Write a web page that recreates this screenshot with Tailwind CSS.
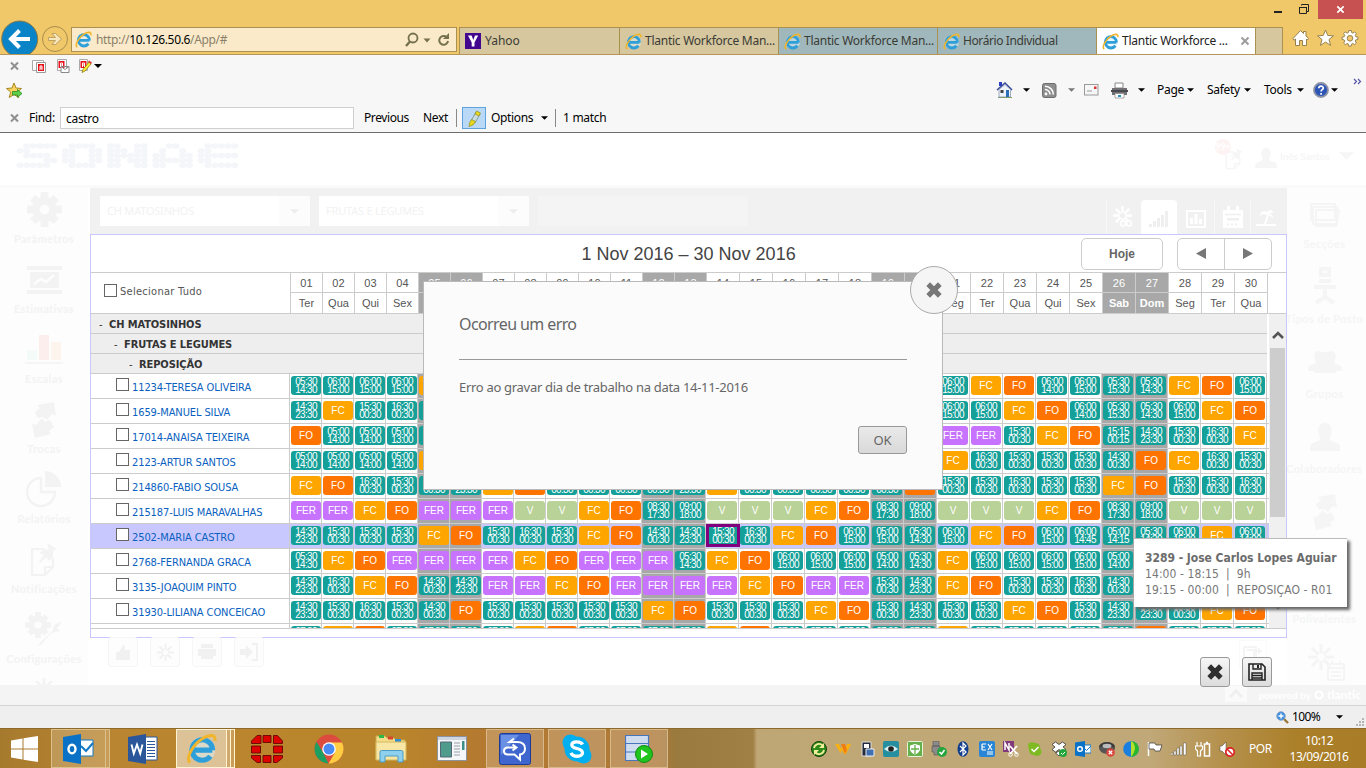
<!DOCTYPE html>
<html lang="pt">
<head>
<meta charset="utf-8">
<title>Tlantic Workforce Management</title>
<script src="https://cdn.jsdelivr.net/npm/@tailwindcss/browser@4"></script>
</head>
<body class="w-[1366px] h-[768px] overflow-hidden bg-white font-['Noto_Sans','Open_Sans',sans-serif]">
<svg class="hidden">
  <symbol id="ie" viewBox="0 0 16 16"><circle cx="8.4" cy="8.6" r="6.6" fill="#d9f1fb" opacity=".5"/><path d="M3.6 8.8h10M13.7 8.9A5.3 5.3 0 1 0 12.6 12" fill="none" stroke="#2f9fda" stroke-width="2.7"/><path d="M2.2 15.2C-.6 13.6 3.3 6 8.6 2.8c3.4-2 7-2.4 6.3 1.2" fill="none" stroke="#f0b52a" stroke-width="1.5"/></symbol>
  <symbol id="caret" viewBox="0 0 8 4"><path d="M0 0h8L4 4z" fill="currentColor"/></symbol>
  <symbol id="x" viewBox="0 0 16 16"><path d="M2.200 2.200l11.600 11.600M13.800 2.200L2.200 13.800" stroke="currentColor" stroke-width="5.200"/></symbol>
  <symbol id="xs" viewBox="0 0 10 10"><path d="M1.5 1.5l7 7M8.5 1.5l-7 7" stroke="currentColor" stroke-width="2"/></symbol>
  <symbol id="gear" viewBox="0 0 36 36"><g fill="currentColor"><circle cx="18" cy="18" r="13"/><g><rect x="14" y="0" width="8" height="36"/><rect x="0" y="14" width="36" height="8"/><rect x="14" y="1" width="8" height="34" transform="rotate(45 18 18)"/><rect x="14" y="1" width="8" height="34" transform="rotate(-45 18 18)"/></g></g><circle cx="18" cy="18" r="5" fill="#fdfdfd"/></symbol>
  <symbol id="burst" viewBox="0 0 20 20"><g stroke="currentColor" stroke-width="2.4"><path d="M10 0v7M10 13v7M0 10h7M13 10h7M3 3l5 5M12 12l5 5M17 3l-5 5M8 12l-5 5"/></g></symbol>
  <symbol id="swap" viewBox="0 0 24 36"><g fill="currentColor"><path d="M5 3L22 0l2 14-4-2-5 6-4-3-5 1-3-6 5-4z"/><path d="M19 32L3 36 0 22l4 1 6-7 3 4 5-2 4 7-5 4z"/></g></symbol>
  <symbol id="note" viewBox="0 0 28 34"><path d="M2 6h13M2 5v27h13l8-8V15M15 32v-8h8" fill="none" stroke="currentColor" stroke-width="2.2"/><path d="M17 0l10 6-4 2 0 6-4 4-3-4-6 6-1-1 5-7-5-2 5-3 5-1z" fill="currentColor"/></symbol>
  <symbol id="person" viewBox="0 0 30 28"><path d="M15 0c5 0 7 4 6.500 9-.4 4-2 5-2 7 1 3 10 3 10.500 7v5H0v-5c.5-4 9-4 10.500-7 0-2-1.600-3-2-7C8 4 10 0 15 0z" fill="currentColor"/></symbol>
</svg>
<div class="flex flex-col w-[1366px] h-[768px]">

<!-- browser frame -->
<header class="h-[55px] bg-[#f0c869] border-b border-[#b8965a] flex flex-col shrink-0">
  <div class="h-[19px] flex justify-end pr-[3px]">
    <svg width="92" height="19"><rect x="48" y="11" width="8" height="2" fill="#222"/><path d="M73.500 7.500h7v6h-7zM73 7.500h8M75.500 5.500v-1h7v7h-1.500" fill="none" stroke="#222"/></svg>
    <div class="w-[45px] h-[19px] bg-[#c75050] text-white flex items-center justify-center"><svg width="9" height="9"><use href="#xs"/></svg></div>
  </div>
  <div class="h-[35px] flex items-end">
    <svg width="41" height="35" class="shrink-0"><circle cx="19.700" cy="20" r="18" fill="#0a84c6" stroke="#8d7a45"/><path d="M30 20H12M19.500 11.500L11 20l8.500 8.500" fill="none" stroke="#fff" stroke-width="4"/></svg>
    <svg width="30" height="35" class="shrink-0"><circle cx="14" cy="20" r="12.500" fill="#f0c869" stroke="#a98d50"/><path d="M7.500 18.500h7l-3.500-4h3.500l6 5.500-6 5.500H11l3.500-4h-7z" fill="#f8e6bd" stroke="#b09455" stroke-width=".8"/></svg>
    <div class="w-[386px] h-[25px] mb-[2px] bg-[#faeac9] border border-[#ab9150] flex items-center pl-[3px] text-[12px] text-[#8a8169] shrink-0">
      <svg width="17" height="17"><use href="#ie"/></svg>
      <span class="ml-[4px] tracking-[-0.34px] whitespace-nowrap"><span>http://</span><span class="text-black">10.126.50.6</span>/App/#</span>
      <svg class="ml-auto mr-[5px]" width="46" height="16" fill="none" stroke="#75704f"><circle cx="8" cy="6" r="4.500" stroke-width="1.800"/><path d="M5 9.500l-4 4.500" stroke-width="2.400"/><path d="M18.500 6.500h7l-3.500 4z" fill="#75704f" stroke="none"/><path d="M43 9a4.400 4.400 0 1 1-1.500-4" stroke-width="2"/><path d="M44 1v6h-6z" fill="#75704f" stroke="none"/></svg>
    </div>
    <nav class="ml-[2px] h-[27px] flex text-[12px] text-[#3b3b35] border-l border-t border-[#ab9150] tracking-[-0.26px] whitespace-nowrap">
      <div class="w-[160px] bg-[#d6c79f] border-r border-[#ab9150] flex items-center pl-[5px] gap-[4px]"><svg width="16" height="16"><rect width="16" height="16" fill="#41078f"/><path d="M3 2.500h3.600L8.300 7 10 2.500h3.200L9.500 9.500v4H6.700v-4z" fill="#fff"/></svg><span class="tracking-normal">Yahoo</span></div>
      <div class="w-[159px] bg-[#d6c79f] border-r border-[#ab9150] flex items-center pl-[5px] gap-[3px]"><svg width="17" height="17"><use href="#ie"/></svg>Tlantic Workforce Man...</div>
      <div class="w-[159px] bg-[#a0b8bc] border-r border-[#ab9150] flex items-center pl-[5px] gap-[3px]"><svg width="17" height="17"><use href="#ie"/></svg>Tlantic Workforce Man...</div>
      <div class="w-[159px] bg-[#a0b8bc] border-r border-[#ab9150] flex items-center pl-[5px] gap-[3px]"><svg width="17" height="17"><use href="#ie"/></svg><span class="tracking-[-0.4px]">Horário Individual</span></div>
      <div class="w-[159px] bg-white border-r border-[#ab9150] flex items-center pl-[5px] gap-[3px] text-[#222]"><svg width="17" height="17"><use href="#ie"/></svg>Tlantic Workforce ...<svg class="ml-auto mr-[5px] text-[#9c9c9c]" width="10" height="10"><use href="#xs"/></svg></div>
      <div class="w-[27px] bg-[#d6c79f] border-r border-[#ab9150]"></div>
    </nav>
    <svg class="ml-[9px] mb-[7px]" width="68" height="18" fill="#fff" stroke="#97824f" stroke-width="1"><path d="M1 9.500L8.500 1.500l3 3V2.500h2.500V7l2.500 2.500-1 1.500-1-1v6.500h-4v-5h-3v5h-4V10l-1.500 1.200z"/><path d="M33.500 1l2.300 5.500 5.700.3-4.500 3.700 1.600 5.900-5.100-3.300-5.100 3.300 1.600-5.900-4.500-3.700 5.700-.3z"/><path d="M56.800 1.500h2.400l.4 2 1.300.6 1.800-1.200 1.700 1.700-1.100 1.800.5 1.300 2.100.4v2.400l-2.100.4-.5 1.300 1.100 1.800-1.700 1.700-1.800-1.200-1.300.6-.4 2h-2.400l-.4-2-1.300-.6-1.800 1.200-1.700-1.700 1.100-1.800-.5-1.300-2.100-.4V8.100l2.100-.4.5-1.300-1.100-1.800 1.700-1.700 1.800 1.200 1.300-.6z"/><circle cx="58" cy="9.300" r="2.800" fill="#f0c869"/></svg>
  </div>
</header>

<!-- toolbars -->
<section class="h-[78px] bg-[#f7f7f7] border-b border-[#6d6d6d] text-[12px] text-black shrink-0 tracking-[-0.3px]">
  <div class="h-[22px] flex items-center pl-[9px]">
    <svg class="text-[#8f8f8f]" width="11" height="10"><use href="#xs"/></svg>
    <svg class="ml-[12px]" width="72" height="16"><g fill="#fff" stroke="#aaa"><path d="M.5 2.500h11v10H.5zM25.500 1.500h9v11h-9zM47.500 1.500h8v11h-8z"/><path d="M4.500 4.500h9v10h-9z" stroke="#999"/></g><g fill="#e8141c"><path d="M6 6h6v7H6zM26.500 3h6v7h-6zM48.500 3h6v7h-6z"/></g><path d="M8 12V8h2v4M8 10h2M28.500 9V5h2v4M28.500 7h2M50.500 9V5h2v4M50.500 7h2" stroke="#fff" fill="none"/><path d="M29 8.500h8v6h-8zl4 3 4-3" fill="#fff" stroke="#888"/><path d="M57 4l2 2-6 7-3 1.500 1-3z" fill="#ffee30" stroke="#8a7a10" stroke-width=".8"/><path d="M57 2.500l3 2-1 1.500-3-2z" fill="#e03a3a"/></svg>
    <svg class="-ml-[10px]" width="8" height="4"><use href="#caret"/></svg>
  </div>
  <div class="h-[27px] flex items-center pl-[6px]">
    <svg width="17" height="17"><path d="M8 1l2 5 5.500.5-4.200 3.600 1.500 5.400L8 12.500l-4.800 3 1.500-5.400L.5 6.500 6 6z" fill="#fbd460" stroke="#a88620"/><path d="M6.500 9.500h5V7.500l4.500 4-4.500 3.800v-2.300h-5z" fill="#5fd04a" stroke="#2b8a25" stroke-width=".8"/></svg>
    <div class="ml-auto flex items-center mr-[4px] -mt-px">
      <svg width="17" height="18"><path d="M3 1h3v4H3z" fill="#2b3fc0"/><path d="M1 9l8-7 7 7" fill="none" stroke="#3a4a9a" stroke-width="1.600"/><path d="M3 8.500L9 3.500l5.500 5V16H3z" fill="#eef2fa" stroke="#7c8cab" stroke-width=".7"/><path d="M4.500 9h3v3h-3z" fill="#444"/><path d="M10 9h3v7h-3z" fill="#2a6fb5"/><path d="M2 16.500h14" stroke="#7f9a6c"/></svg>
      <svg class="ml-[10px]" width="7" height="4"><use href="#caret"/></svg>
      <svg class="ml-[12px]" width="15" height="15"><rect x=".5" y=".5" width="13.500" height="14" rx="2" fill="#8e8e8e" stroke="#6e6e6e"/><circle cx="4" cy="11" r="1.400" fill="#fff"/><path d="M3 6.500a5 5 0 0 1 5 5M3 3.200a8.300 8.300 0 0 1 8.300 8.300" fill="none" stroke="#fff" stroke-width="1.500"/></svg>
      <svg class="ml-[11px] text-[#777]" width="7" height="4"><use href="#caret"/></svg>
      <svg class="ml-[9px]" width="15" height="12"><rect x=".5" y=".5" width="13.500" height="10.500" fill="#f6f6f6" stroke="#999"/><path d="M10 2.500h2.500v2.500H10z" fill="#d33"/><path d="M3 7h5" stroke="#999"/></svg>
      <svg class="ml-[12px]" width="17" height="17"><path d="M4 1h8v5H4z" fill="#fff" stroke="#888"/><path d="M1 6h15v7H1z" fill="#6f6f74"/><path d="M0 8h17v2H0z" fill="#4a4a4e"/><path d="M4 11.500h9V16H4z" fill="#fff" stroke="#888" stroke-width=".7"/><path d="M7 13h3v2H7z" fill="#2b8fc0"/></svg>
      <svg class="ml-[10px]" width="7" height="4"><use href="#caret"/></svg>
      <span class="ml-[12px] w-[26px]">Page</span><svg class="ml-[4px]" width="7" height="4"><use href="#caret"/></svg>
      <span class="ml-[13px] w-[32px]">Safety</span><svg class="ml-[5px]" width="7" height="4"><use href="#caret"/></svg>
      <span class="ml-[13px] w-[29px]">Tools</span><svg class="ml-[4px]" width="7" height="4"><use href="#caret"/></svg>
      <svg class="ml-[9px]" width="16" height="16"><circle cx="8" cy="8" r="7" fill="#2d55b8" stroke="#8d93a5" stroke-width="1.800"/><path d="M5.800 6.300C5.800 3.300 10.300 3.500 10.300 6c0 1.700-2.200 1.700-2.200 3.400M8.100 11v1.800" fill="none" stroke="#fff" stroke-width="1.700"/></svg>
      <svg class="ml-[2px]" width="7" height="4"><use href="#caret"/></svg>
      <svg class="ml-[15px] mb-[17px]" width="9" height="7" fill="none" stroke="#5555a8" stroke-width="1.200"><path d="M1 1l2.500 2.500L1 6M5 1l2.500 2.500L5 6"/></svg>
    </div>
  </div>
  <div class="h-[28px] flex items-center pl-[9px]">
    <svg class="text-[#8f8f8f]" width="11" height="10"><use href="#xs"/></svg>
    <span class="ml-[9px] w-[31px]">Find:</span>
    <div class="w-[294px] h-[22px] bg-white border border-[#cfcfcf] pl-[5px] leading-[21px]">castro</div>
    <span class="ml-[10px] w-[59px] tracking-[-0.4px] -mt-px">Previous</span><span class="w-[33px] tracking-[-0.3px] -mt-px">Next</span>
    <div class="w-px h-[18px] bg-[#888]"></div>
    <div class="ml-[5px] w-[24px] h-[22px] bg-[#b9d9f7] border border-[#5fa2dd] flex items-center justify-center"><svg width="14" height="17"><path d="M9 2l4 2-5 9-4-2z" fill="#c9dce0" stroke="#7b8f80" stroke-width=".8"/><path d="M9.500 1l4 2-1.500 3-4-2zM4.500 9.500l4 2L6 15l-4 1.500.5-3.500z" fill="#e8d81c" stroke="#88801a" stroke-width=".6"/></svg></div>
    <span class="ml-[5px] w-[50px] tracking-[-0.35px] -mt-px">Options</span><svg width="7" height="4"><use href="#caret"/></svg>
    <div class="ml-[7px] w-px h-[18px] bg-[#888]"></div>
    <span class="ml-[7px]">1 match</span>
  </div>
</section>

<!-- web page -->
<main class="relative h-[572px] bg-white shrink-0 flex flex-col overflow-hidden">
  <div class="h-[52px] flex items-start justify-between pl-[14px] pr-[12px] shrink-0">
    <svg id="logo" class="mt-[9px]" width="226" height="28" fill="#f5f6f9"></svg>
    <div class="flex items-center text-[#f6f6f6] text-[10px] font-bold font-['Lato'] mt-[6px]">
      <div class="relative w-[30px] h-[34px]"><svg class="absolute left-[10px] top-[8px]" width="18" height="24"><use href="#note"/></svg><span class="absolute left-0 top-0 w-[16px] h-[16px] rounded-full bg-[#fdf3f3] text-white text-[9px] text-center leading-[16px]">99+</span></div>
      <svg class="ml-[10px] mt-[4px]" width="22" height="20"><use href="#person"/></svg>
      <span class="ml-[3px] w-[50px] whitespace-nowrap tracking-[-0.1px]">Inês Santos</span>
      <svg class="ml-[9px]" width="15" height="8"><use href="#caret"/></svg>
    </div>
  </div>
  <div class="h-[3px] bg-[#fafafa] shrink-0"></div>
  <div class="flex h-[497px] shrink-0">
    <aside id="left" class="w-[88px] bg-[#fdfdfd] text-[#f3f3f3] text-[11px] font-['Lato'] font-bold flex flex-col"></aside>
    <div class="w-[2px] bg-white"></div>
    <section class="w-[1197px] flex flex-col">
      <div class="h-[46px] bg-[#f1f1f1] flex items-center pl-[10px] text-[11px] text-[#f2f2f2] shrink-0 tracking-[-0.2px]">
        <div class="w-[210px] h-[30px] bg-white flex items-center pl-[7px]">CH MATOSINHOS<div class="ml-auto w-[31px] h-[30px] bg-[#fcfcfc] text-[#eee] flex items-center justify-center"><svg width="9" height="5"><use href="#caret"/></svg></div></div>
        <div class="ml-[9px] w-[210px] h-[30px] bg-white flex items-center pl-[7px]">FRUTAS E LEGUMES<div class="ml-auto w-[31px] h-[30px] bg-[#fcfcfc] text-[#eee] flex items-center justify-center"><svg width="9" height="5"><use href="#caret"/></svg></div></div>
        <div class="ml-[9px] w-[210px] h-[30px] bg-[#f4f4f4]"></div>
        <div class="ml-auto self-end h-[34px] flex text-white mr-[6px]">
          <div class="w-[35px] border-l border-[#f8f8f8] flex items-center justify-center"><svg width="22" height="22"><use href="#burst" width="19" height="19"/><circle cx="10" cy="17.500" r="2.500" fill="#f1f1f1" stroke="#fff" stroke-width="1.500"/><circle cx="16" cy="17.500" r="2.500" fill="#f1f1f1" stroke="#fff" stroke-width="1.500"/></svg></div>
          <div class="w-[36px] bg-white rounded-t-[4px] flex items-center justify-center pt-[4px]"><svg width="20" height="18" fill="#efefef"><path d="M0 14h3v3H0zM4 11h3v6H4zM8 8h3v9H8zM12 5h3v12h-3zM16 1h3v16h-3z"/></svg></div>
          <div class="w-[37px] flex items-center justify-center pt-[4px]"><svg width="20" height="18"><path d="M1 1h18v16H1z" fill="none" stroke="#fff" stroke-width="2"/><path d="M4 8h3v6H4zM8.500 4h3v10h-3zM13 9h3v5h-3z" fill="#fff"/></svg></div>
          <div class="w-[36px] border-l border-[#f8f8f8] flex items-center justify-center"><svg width="20" height="22"><path d="M0 4h20v18H0zM4 0h3v5H4zM13 0h3v5h-3z" fill="#fff"/><path d="M2 8.500h16" stroke="#efefef" stroke-width="1.500"/><path d="M4 12h12v2.500H4zM4 17.500h2v2H4zM8 17.500h2v2H8zM12 17.500h2v2h-2z" fill="#efefef"/></svg></div>
          <div class="w-[31px] border-l border-[#f8f8f8] flex items-center justify-center"><svg width="20" height="20"><path d="M0 18h20M9 17l3-9" stroke="#fff" stroke-width="2"/><path d="M4 9c0-4 4-6 7-4 2-3 6-2 7 1-2-1-4 0-5 1 3 0 4 2 4 4-2-2-4-3-6-3-3-1-5-1-7 1z" fill="#fff"/></svg></div>
        </div>
      </div>

      <!-- schedule -->
      <div class="h-[404px] border border-[#c8c8ff] bg-white flex flex-col shrink-0">
        <div class="relative h-[37px] flex items-center justify-end pr-[14px] shrink-0 font-['Liberation_Sans']">
          <h1 class="absolute left-[490.5px] top-[8px] text-[18px] leading-[22px] text-[#444] whitespace-nowrap">1 Nov 2016 – 30 Nov 2016</h1>
          <div class="w-[82px] h-[32px] border border-[#ccc] rounded-[5px] text-[12px] font-bold text-[#666] flex items-center justify-center">Hoje</div>
          <div class="ml-[14px] w-[95px] h-[32px] border border-[#ccc] rounded-[5px] flex text-[#777]">
            <div class="w-[47px] border-r border-[#ccc] flex items-center justify-center"><svg width="10" height="11"><path d="M10 0v11L0 5.500z" fill="currentColor"/></svg></div>
            <div class="flex-1 flex items-center justify-center"><svg width="10" height="11"><path d="M0 0v11l10-5.500z" fill="currentColor"/></svg></div>
          </div>
        </div>
        <div class="h-[42px] border-y border-[#ccc] flex shrink-0">
          <div class="w-[199px] flex items-center pl-[13px] text-[11px] text-[#555] font-['DejaVu_Sans_Condensed','DejaVu_Sans'] tracking-[0.28px]"><span class="w-[13px] h-[13px] border border-[#666] bg-white mr-[3px] -mt-[5px]"></span><span class="-mt-[2px]">Selecionar Tudo</span></div>
          <div id="days" class="flex text-[11px] text-[#555] font-['Liberation_Sans'] border-r border-[#ccc]"></div>
        </div>
        <div class="h-[315px] border-b border-[#ccc] flex overflow-hidden shrink-0">
          <div id="rows" class="w-[1178px] h-[314px] overflow-hidden"></div>
          <div class="w-[17px] h-[314px] bg-[#f0f0f0] flex flex-col items-center">
            <svg class="mt-[16px]" width="12" height="10"><path d="M1 8l5-5 5 5" fill="none" stroke="#555" stroke-width="2.600"/></svg>
            <div class="mt-[8px] w-[15px] h-[169px] bg-[#cdcdcd]"></div>
            <svg class="mt-[84px]" width="12" height="10"><path d="M1 2l5 5 5-5" fill="none" stroke="#555" stroke-width="2.600"/></svg>
          </div>
        </div>
      </div>
      <div class="flex pl-[18px] gap-[12px] text-[#f1f1f1] -mt-px">
        <div class="w-[30px] h-[30px] border border-[#f6f6f6] rounded-[3px] bg-[#fdfdfd] flex items-center justify-center"><svg width="16" height="16"><path d="M1 8h3l4-7c3 0 2 4 1 5h6v10H1z" fill="currentColor"/></svg></div>
        <div class="w-[30px] h-[30px] border border-[#f6f6f6] rounded-[3px] bg-[#fdfdfd] flex items-center justify-center"><svg width="17" height="17"><use href="#burst"/></svg></div>
        <div class="w-[30px] h-[30px] border border-[#f6f6f6] rounded-[3px] bg-[#fdfdfd] flex items-center justify-center"><svg width="18" height="16"><path d="M3 0h12v4H3zM0 5h18v7H0zM3 12h12v3H3z" fill="currentColor"/></svg></div>
        <div class="w-[30px] h-[30px] border border-[#f6f6f6] rounded-[3px] bg-[#fdfdfd] flex items-center justify-center"><svg width="18" height="18"><path d="M0 6h6V2l7 7-7 7v-4H0z" fill="currentColor"/><path d="M12 1h5v16h-5" fill="none" stroke="currentColor" stroke-width="2"/></svg></div>
        <div class="ml-auto mr-[20px] mt-[3px] w-[28px] h-[28px] border border-[#fafafa] flex justify-center pt-[5px]"><svg width="20" height="14" fill="none" stroke="#f1f1f1" stroke-width="1.500"><path d="M1 1h12v12M4 4h7v9M1 1v12M13 5h6M16 2v6"/></svg></div>
      </div>
    </section>
    <aside id="right" class="w-[79px] bg-[#fdfdfd] text-[#f5f5f5] text-[11px] font-['Lato'] font-bold flex flex-col overflow-hidden"></aside>
  </div>
  <footer class="h-[20px] bg-[#f4f4f4] flex items-center justify-end pr-[5px] text-[10px] font-bold text-white font-['Lato'] shrink-0">
    <div class="w-[22px] h-[16px] mb-[3px] bg-[#fafafa] text-[#efefef] flex items-center justify-center"><svg width="14" height="9"><path d="M1 8l6-6 6 6" stroke="currentColor" stroke-width="3" fill="none"/></svg></div>
    <span class="ml-[11px]">powered by</span><svg class="mx-[3px]" width="10" height="10"><circle cx="5" cy="5" r="3.500" fill="none" stroke="#fff" stroke-width="2.200"/></svg><span class="text-[12px] font-black">tlantic</span>
  </footer>

  <!-- page actions -->
  <div class="absolute left-[1200px] top-[524px] flex gap-[12px]">
    <div class="w-[30px] h-[30px] rounded-[3px] border border-[#999] bg-linear-to-b from-[#f6f6f6] to-[#dcdcdc] text-[#2f2f2f] flex items-center justify-center"><svg width="16" height="16"><use href="#x"/></svg></div>
    <div class="w-[30px] h-[30px] rounded-[3px] border border-[#999] bg-linear-to-b from-[#f6f6f6] to-[#dcdcdc] flex items-center justify-center"><svg width="18" height="18" fill="none" stroke="#222" stroke-width="1.600"><path d="M1 1h13l3 3v13H1z"/><path d="M5 1v5h8V1M4 17v-7h10v7M4.500 12.500h9M4.500 15h9" stroke-width="1.400"/><path d="M10 2v3" stroke-width="2"/></svg></div>
  </div>

  <!-- error dialog -->
  <div class="absolute left-[423px] top-[148px] w-[520px] h-[209px] bg-[#fbfbfb] border border-[#b9b9b9] text-[#666] px-[35px] pt-[30px] flex flex-col">
    <h2 class="text-[16px] leading-[24px] h-[48px] border-b border-[#999] tracking-[-0.6px]">Ocorreu um erro</h2>
    <p class="mt-[17px] text-[13px] leading-[20px] tracking-[-0.3px] whitespace-nowrap">Erro ao gravar dia de trabalho na data 14-11-2016</p>
    <button class="mt-[29px] self-end w-[49px] h-[28px] border border-[#999] rounded-[3px] bg-linear-to-b from-[#eaeaea] to-[#d9d9d9] text-[13px] leading-[24px]">OK</button>
    <div class="absolute -right-[16px] -top-[16px] w-[48px] h-[48px] rounded-full border border-[#aaa] bg-[#f5f5f5] text-[#777] flex items-center justify-center"><svg width="16" height="16"><use href="#x"/></svg></div>
  </div>

  <!-- shift tooltip -->
  <div class="absolute left-[1134px] top-[405px] w-[213px] h-[69px] bg-white border-t border-[#bbb] shadow-[3px_3px_3px_#666] pl-[11px] pt-[11px] text-[12px] leading-[16px] text-[#777] font-['DejaVu_Sans_Condensed','DejaVu_Sans'] whitespace-pre"><div class="font-bold text-[#6c6c6c] tracking-[-0.03px]">3289 - Jose Carlos Lopes Aguiar</div><div class="tracking-[0.08px]">14:00 - 18:15  |  9h</div><div class="tracking-[0.08px]">19:15 - 00:00  |  REPOSIÇAO - R01</div></div>
</main>

<!-- status bar -->
<div class="h-[23px] bg-[#efefef] border-t border-[#d5d5d5] flex items-center justify-end text-[12px] text-black shrink-0">
  <svg width="13" height="13"><path d="M7.500 7.500l4.500 4.500" stroke="#9c7a40" stroke-width="2.400"/><circle cx="5" cy="5" r="4.200" fill="#3f8fe0" stroke="#7aa0c8"/><path d="M5 2.500v5M2.500 5h5" stroke="#fff" stroke-width="1.400"/></svg>
  <span class="ml-[3px] w-[30px] tracking-[-0.6px]">100%</span>
  <svg class="ml-[14px]" width="7" height="4"><use href="#caret"/></svg>
  <svg class="ml-[13px] mt-[10px] mr-[1px]" width="9" height="9" fill="#b5b5b5"><path d="M6 0h2v2H6zM3 3h2v2H3zM6 3h2v2H6zM0 6h2v2H0zM3 6h2v2H3zM6 6h2v2H6z"/></svg>
</div>

<!-- taskbar -->
<footer class="h-[40px] flex items-center border-t border-[#8d6a2c] shrink-0 bg-[linear-gradient(90deg,#a67a2e_0,#ba8530_110px,#b9852b_400px,#b47a30_480px,#ad7838_660px,#9a7a3e_675px,#a08045_753px,#bfa775_757px,#c0a878_1150px,#b5914d_1220px,#ab7f28_1300px,#a97c28_1366px)]">
  <svg class="ml-[11px]" width="28" height="26" fill="#fff"><path d="M0 4.500L11.500 2.500v10H0zM12.500 2.300L27 0v12.500H12.500zM0 13.500h11.500v10L0 21.500zM12.500 13.500H27V26l-14.500-2.300z"/></svg>
  <div class="ml-[12px] w-[55px] h-[39px] border border-[#dcc18a] bg-white/20 flex items-center justify-center"><svg width="31" height="30"><path d="M15 6h15v16H15z" fill="#fff" stroke="#1479c4"/><path d="M18 12l5 5 7-8" fill="none" stroke="#1479c4" stroke-width="2"/><path d="M0 3l18-3v30L0 27z" fill="#0a72c6"/><ellipse cx="9" cy="15" rx="3.500" ry="4.300" fill="none" stroke="#fff" stroke-width="2.400"/></svg></div>
  <div class="w-[4px] h-[39px] border-r border-y border-[#dcc18a] bg-white/20"></div>
  <svg class="ml-[18px]" width="30" height="30"><path d="M15 3h14v23H15z" fill="#fff" stroke="#2b579a"/><path d="M19 7.500h8M19 10.500h8M19 13.500h8M19 16.500h8M19 19.500h8M19 22.500h8" stroke="#2b579a"/><path d="M0 3l18-3v30L0 27z" fill="#2b579a"/><path d="M3.500 10.500l2.300 9 3.200-9 3.200 9 2.300-9" fill="none" stroke="#fff" stroke-width="1.900"/></svg>
  <div class="ml-[18px] w-[51px] h-[39px] border border-[#fff3d2] bg-white/50 flex items-center justify-center"><svg width="31" height="31"><use href="#ie"/></svg></div>
  <div class="w-[4px] h-[39px] border-r border-y border-[#fff3d2] bg-white/30"></div>
  <div class="w-[4px] h-[39px] border-r border-y border-[#fff3d2] bg-white/20"></div>
  <svg class="ml-[16px]" width="32" height="28" fill="#dd0000" stroke="#5b0000" stroke-width=".8"><path d="M6 .5h4v8H.5V6zM12 .5h8v7h-8zM22.500 .5h4l5 5.500v2.500h-9zM.5 11h9v7h-9zM22.500 11h9v7h-9zM.5 20.500h9v7H6L.5 23zM12 20.500h8v7h-8zM22.500 20.500h9V23L26 27.500h-3.500z"/></svg>
  <svg class="ml-[31px]" width="30" height="30"><circle cx="15" cy="15" r="14.500" fill="#dd4b3e"/><path d="M2.500 7.700L9 18.500 14.500 29.500A14.500 14.500 0 0 1 2.500 7.700z" fill="#1da05f"/><path d="M15 8.500h13a14.500 14.500 0 0 1-13.500 21L21 18.500z" fill="#ffcd42"/><circle cx="15" cy="15" r="6.800" fill="#fff"/><circle cx="15" cy="15" r="5.500" fill="#4a8af4"/></svg>
  <svg class="ml-[31px]" width="32" height="29"><path d="M1 2h9l2 2h7l2 2h9v19H1z" fill="#f3dd8a" stroke="#c9a94c"/><path d="M4 1h5v3H4z" fill="#2db84a"/><path d="M13 2.500h5v3h-5z" fill="#d8452b"/><path d="M20 5h6v3h-6z" fill="#2b8fd8"/><path d="M1 8h30v18H1z" fill="#f7e6a4" stroke="#d6b85e"/><path d="M5 28V18q0-1.500 1.500-1.500h20q1.500 0 1.500 1.500v10h-5v-6H10v6z" fill="#8ed0ee" stroke="#4a9cc4"/></svg>
  <svg class="ml-[30px]" width="30" height="26"><path d="M.5 .5h29v24H.5z" fill="#f5f6f8" stroke="#8c93a0"/><path d="M1 1h28v3H1z" fill="#cfd6e2"/><path d="M3.500 6h11v15h-11z" fill="#4f9c8c" stroke="#567"/><path d="M17 7h6M17 10h6M17 13h6M17 16h6M17 19h6" stroke="#b8bcc4" stroke-width="1.300"/><path d="M25 5h2.500v9H25z" fill="#3c8f88"/></svg>
  <div class="ml-[19px] w-[58px] h-[39px] border border-[#d9b98a] bg-white/20 flex items-center justify-center"><svg width="32" height="32"><rect x=".5" y=".5" width="31" height="31" rx="2" fill="#3f66cf" stroke="#1f3a94"/><path d="M2 2h18L2 22z" fill="#7ea2ec" opacity=".7"/><path d="M15 5.500l-4.500 3.500H18c5 0 8 2.500 8 6.500 0 3-2 5.500-5 6v5l-5.500-5H9c-3 0-4-1.500-4-3.500S6.500 14.500 9 14.500h8M13.500 11.500l4 3-4 3" fill="none" stroke="#fff" stroke-width="2"/></svg></div>
  <div class="ml-[4px] w-[58px] h-[39px] border border-[#d9b98a] bg-white/20 flex items-center justify-center"><svg width="30" height="30"><circle cx="15" cy="15" r="12.500" fill="#00aff0"/><circle cx="8.500" cy="8.500" r="8" fill="#00aff0"/><circle cx="21.500" cy="21.500" r="8" fill="#00aff0"/><path d="M20.500 10.500C19 7 9.800 6.600 9.800 11c0 4.600 10.700 2.400 10.700 7.800 0 4.700-9.800 4.500-11.500 0" fill="none" stroke="#fff" stroke-width="3.300"/></svg></div>
  <div class="ml-[4px] w-[58px] h-[39px] border border-[#d9b98a] bg-white/20 flex items-center justify-center"><svg width="28" height="28"><path d="M.5 .5h23v25H.5zM.5 8.500h23M.5 17h23" fill="#cfdcf0" stroke="#4876bd" stroke-width="1.200"/><circle cx="19" cy="19" r="8.500" fill="#1fc41f" stroke="#148a14"/><path d="M16 14.500v9l7-4.500z" fill="#fff"/></svg></div>
  <div class="ml-auto flex gap-[8px]">
    <svg width="16" height="16"><circle cx="8" cy="8" r="7.500" fill="#2f8a1c" stroke="#123f0c"/><path d="M3 7a5 5 0 0 1 8.500-2.500M13 9a5 5 0 0 1-8.500 2.500" fill="none" stroke="#f2ee9a" stroke-width="1.800"/><path d="M13 2v5H8zM3 14V9h5z" fill="#f2ee9a"/></svg>
    <svg width="16" height="16"><path d="M0 3h4l2 5 2-5 2 5 2-5h4l-5 10h-2l-2-4-2 4H6z" fill="#f9b112"/><path d="M6 3l4 10 2-4-2-6z" fill="#f07c12"/></svg>
    <svg width="16" height="16"><path d="M3 1h9v14H3z" fill="#252b3a" stroke="#ddd"/><path d="M5 3h5v4H5z" fill="#fff"/><path d="M7 8h8v7H7z" fill="#3f6fb0" stroke="#eee"/></svg>
    <svg width="16" height="16"><rect width="16" height="16" rx="2" fill="#258f9f"/><path d="M1 8q7-7 14 0-7 6-14 0z" fill="#dceff2"/><circle cx="8" cy="8" r="2.800" fill="#222"/></svg>
    <svg width="16" height="16"><rect x=".5" y=".5" width="15" height="15" rx="1" fill="#66b04c" stroke="#e5f3dd"/><path d="M8 3l5 1.500v4Q12 12 8 13.500 4 12 3 8.500v-4z" fill="#fff"/><path d="M8 4v9M4 8h8" stroke="#66b04c" stroke-width="1.300"/></svg>
    <svg width="16" height="16"><path d="M2 0h6v5H2zM1 5h8v6H7v3H3v-3H1z" fill="#8b8b8b" stroke="#555" stroke-width=".6"/><circle cx="11" cy="11" r="5" fill="#25a53c"/><path d="M8.500 11l2 2 3-4" stroke="#fff" fill="none" stroke-width="1.500"/></svg>
    <svg width="16" height="16"><ellipse cx="8" cy="8" rx="5.500" ry="7.800" fill="#0f3f8c"/><path d="M5 5l6 6-3 3V2l3 3-6 6" fill="none" stroke="#fff" stroke-width="1.200"/></svg>
    <svg width="16" height="16"><rect width="16" height="16" rx="2" fill="#2a86d4"/><path d="M3 3h4M3 6h3M3 9h4M3 3v6M9 3l4 6M13 3L9 9M8 13h6M8 11h6" stroke="#fff" stroke-width="1.200"/></svg>
    <svg width="16" height="16"><rect width="11" height="11" fill="#80397b"/><path d="M2 9V2l4 7V2" fill="none" stroke="#fff" stroke-width="1.500"/><path d="M7 5l7 8M14 5l-7 8" stroke="#fff" stroke-width="1.800"/><circle cx="7.500" cy="13.500" r="1.800" fill="none" stroke="#fff"/><circle cx="13.500" cy="13.500" r="1.800" fill="none" stroke="#fff"/></svg>
    <svg width="16" height="16"><path d="M1 3Q4 0 8 2q5 0 5 5 3 4 0 7-3 2-6 0-4 0-5-4z" fill="#7fba22"/><path d="M4.500 8l2.500 2.500L11.500 6" stroke="#fff" fill="none" stroke-width="1.500"/></svg>
    <svg width="16" height="16"><path d="M4.500 1L8 3.500 11.500 1 15 3.500 12 6l3 2.500L11.500 11 8 8.500 4.500 11 1 8.500 4 6 1 3.500zM4.500 12L8 10l3.500 2L8 15z" fill="#fff" stroke="#333" stroke-width=".8"/><circle cx="12" cy="12" r="4" fill="#25a53c"/><path d="M10 12l1.500 1.500L14 11" stroke="#fff" fill="none"/></svg>
    <svg width="16" height="16"><path d="M8 4h8v8H8z" fill="#fff" stroke="#1479c4"/><path d="M9 7l2.500 2.500L16 5" fill="none" stroke="#1479c4"/><path d="M0 1.500L10 0v16L0 14.500z" fill="#0a72c6"/><circle cx="5" cy="8" r="2.300" fill="none" stroke="#fff" stroke-width="1.500"/></svg>
    <svg width="16" height="16"><ellipse cx="8" cy="6" rx="8" ry="5" fill="#3b3b3b"/><path d="M0 6q0 6 8 7 8-1 8-7z" fill="#555"/><ellipse cx="8" cy="5" rx="4.500" ry="2.200" fill="#bbb"/><circle cx="11.500" cy="11.500" r="4.300" fill="#d8453a"/><path d="M9.800 9.800l3.400 3.400M13.200 9.800l-3.400 3.400" stroke="#fff" stroke-width="1.300"/></svg>
    <svg width="16" height="16"><circle cx="8" cy="8" r="7.800" fill="#1b7fe0"/><path d="M8 .2a7.800 7.800 0 0 1 0 15.600z" fill="#28b62c"/><path d="M8 .2q3.500 1 4 7Q11 13 8 15.800z" fill="#b5e02e"/></svg>
    <svg width="16" height="16"><path d="M1.500 1v14" stroke="#fff" stroke-width="1.500"/><path d="M2 2h6l1 2h6l-2 6H8L7 8H2z" fill="#fff" stroke="#333" stroke-width=".7"/></svg>
    <svg width="16" height="16" fill="#fff"><path d="M0 12h2v2H0zM3 10h2v4H3zM6 7h2v7H6zM9 5h2v9H9zM12.500 2h2.500v12h-2.500z" stroke="#444" stroke-width=".4"/></svg>
    <svg width="16" height="16" fill="none" stroke="#fff"><path d="M2 1v4M6 1v4M.5 5h7v3l-2 2v5h-3v-5l-2-2z" stroke-width="1.200"/><path d="M9.500 3h5v12h-5zM11 1.500h2" stroke-width="1.500"/></svg>
    <svg width="16" height="16"><path d="M1 5h2l4-4v13l-4-4H1z" fill="#fff" stroke="#444" stroke-width=".5"/><circle cx="11" cy="11" r="4.200" fill="#fff" stroke="#d22" stroke-width="1.700"/><path d="M8 8l6 6" stroke="#d22" stroke-width="1.500"/></svg>
  </div>
  <span class="ml-[14px] w-[36px] text-[12px] text-white tracking-[-0.4px]">POR</span>
  <div class="w-[68px] mr-[13px] text-center text-[12px] leading-[16px] text-white tracking-[-0.5px] mt-[1px]">10:12<br>13/09/2016</div>
</footer>
</div>

<script>
// dot-matrix logo
const LOGO = [
  [".#####","##....",".####.","....##","#####."],
  [".####.","##..##","##..##","##..##",".####."],
  ["##..##","###.##","######","##.###","##..##"],
  ["..##..",".#..#.","##..##","######","##..##"],
  [".#####","##....","######","##....",".#####"]];
let dots = "";
LOGO.forEach((g, l) => g.forEach((r, y) => [...r].forEach((c, x) => {
  if (c === "#") dots += `<ellipse cx="${6 + l * 45.3 + x * 6.7}" cy="${4 + y * 4.8}" rx="3.6" ry="2.8"/>`;
})));
document.getElementById("logo").innerHTML = dots;

// side menus
const use = (id, w, h) => `<svg width="${w}" height="${h}"><use href="#${id}"/></svg>`;
const left = [
  ["Parâmetros", use("gear", 35, 35)],
  ["Estimativas", '<svg width="35" height="28" fill="currentColor"><path d="M0 0h35v4H0zM0 24h35v4H0zM3 6h29v16H3z"/><path d="M7 18l7-5 5 3 8-7" stroke="#fdfdfd" stroke-width="2.500" fill="none"/></svg>'],
  ["Escalas", '<svg width="38" height="30"><path d="M2 15h10v10H2z" fill="#f3faf7"/><path d="M14 0h10v25H14z" fill="#fdeeee"/><path d="M26 7h10v18H26z" fill="#fdf4ee"/><path d="M0 27h38v2H0z" fill="#f5f5f5"/></svg>'],
  ["Trocas", use("swap", 24, 36)],
  ["Relatórios", '<svg width="36" height="37"><path d="M15 7a14 14 0 1 0 14 14H15z" fill="none" stroke="currentColor" stroke-width="2.500"/><path d="M19 0a16 16 0 0 1 16 16H19z" fill="currentColor"/></svg>'],
  ["Notificações", use("note", 28, 34)],
  ["Configurações", '<svg width="38" height="36"><use href="#gear" width="26" height="26"/><path d="M12 34l16-16c0-5 3-7 9-8l-5 6 3 3-9 2-10 12z" fill="currentColor"/></svg>']];
const item = (h, ic) => ([t, svg]) => `<div class="${h} flex flex-col items-center shrink-0"><div class="${ic} flex items-center justify-center">${svg}</div><div class="leading-[16px] tracking-[0.4px] whitespace-nowrap">${t}</div></div>`;
document.getElementById("left").innerHTML = left.map(item("h-[70px]", "h-[43px]")).join("") + '<div class="h-[7px] overflow-hidden flex justify-center">' + use("burst", 22, 22) + "</div>";
const right = [
  ["Secções", '<svg class="mt-[8px]" width="30" height="26" fill="#fdfdfd" stroke="currentColor" stroke-width="2"><path d="M1 1h24v16H1zM3 4h24v17H3zM6 7h23l-3 16H6z"/></svg>'],
  ["Tipos de Posto", '<svg width="26" height="40" fill="none" stroke="currentColor" stroke-width="4"><path d="M9 2h8v6H9zM7 14h12M2 20h22M13 20v12M4 36l9-6 9 6"/></svg>'],
  ["Grupos", '<svg width="34" height="22"><use href="#person" width="22" height="20"/><use href="#person" x="12" width="22" height="20"/><use href="#person" x="5" y="1" width="24" height="21"/></svg>'],
  ["Colaboradores", use("person", 30, 28)],
  ["Trocas de", use("swap", 24, 36)],
  ["Polivalentes", use("swap", 24, 36)]];
document.getElementById("right").innerHTML = '<div class="-mt-px"></div>' + right.map(item("h-[75px] -ml-[4px]", "h-[49px]")).join("") + '<div class="flex justify-center mt-[7px]"><svg width="38" height="38"><use href="#burst" width="26" height="26"/><path d="M20 20h16v16H20zM20 24h16M24 17v4M32 17v4M23 28h10M23 32h10" fill="none" stroke="currentColor" stroke-width="2"/></svg></div>';

// calendar header
const WD = ["Seg", "Ter", "Qua", "Qui", "Sex", "Sab", "Dom"];
const weekend = i => i % 7 === 4 || i % 7 === 5;
const width = i => i < 13 ? "w-[32px]" : "w-[33px]";
let head = "";
for (let i = 0; i < 30; i++) {
  const we = weekend(i) ? "bg-[#a8a8a8] text-white" : "";
  const wd = weekend(i) ? "font-bold" : "";
  head += `<div class="${width(i)} ${we} border-l border-[#ccc] text-center"><div class="h-[20px] border-b border-[#ccc] leading-[21px] tracking-[0.1px]">${String(i + 1).padStart(2, "0")}</div><div class="h-[20px] leading-[20px] ${wd}">${WD[(i + 1) % 7]}</div></div>`;
}
document.getElementById("days").innerHTML = head;

// schedule rows: C = FC, O = FO, R = FER, V, otherwise start/end of the shift
const S = { a: "05:30 14:30", b: "06:00 15:00", c: "14:30 23:30", d: "15:30 00:30", e: "16:30 00:30", f: "05:00 14:00", g: "05:00 13:00", h: "06:00 14:00", i: "05:30 15:30", j: "15:15 00:15", k: "14:30 00:30", l: "08:30 17:30", m: "09:00 18:00", n: "05:00 15:00", o: "06:00 14:45", p: "05:00 14:15", q: "07:30 16:30" };
const FIX = { C: ["FC", "bg-[#ffa500]"], O: ["FO", "bg-[#ff7300]"], R: ["FER", "bg-[#c873ff]"], V: ["V", "bg-[#b9d297]"] };
const EMP = [
  ["11234-TERESA OLIVEIRA", "abbbCObbbbaaCObbbbiabCOhbiaCOb"],
  ["1659-MANUEL SILVA",     "cCdedddCOddccCOddddcbbCOhiabCO"],
  ["17014-ANAISA TEIXEIRA", "OffgfCOfffffCOffffffRRdCOjcdeC"],
  ["2123-ARTUR SANTOS",     "ffffCOffffffCOffffffCedddkOCed"],
  ["214860-FABIO SOUSA",    "COedkcCOddddcCdddddOddeddCOdde"],
  ["215187-LUIS MARAVALHAS","RRCORRRVVCOlmVVVCOlmVVVCOlmVVV"],
  ["2502-MARIA CASTRO",     "cdddCOdedCOkcdeCObnabCObopabCh"],
  ["2768-FERNANDA GRACA",   "aCORRRRCORRRaCObbbfaCbbbbfaCOb"],
  ["3135-JOAQUIM PINTO",    "ceCOkcRRCORRRRCORRdcCOddekcddC"],
  ["31930-LILIANA CONCEICAO","cdedkOdddddCOdddCOdcddCOdccdCO"],
  ["33012-MARTA LOPES",     "qCOqqqqCOqqqqCOqqqqqCqqqqqOqqq"]];
const group = (pad, t) => `<div class="h-[20px] w-[1176px] bg-[#eee] border-b border-[#ccc] text-[11px] font-bold text-[#333] leading-[21px] ${pad} flex"><span class="font-normal w-[10px]">-</span><span class="tracking-[-0.1px]">${t}</span></div>`;
let body = '<div class="font-[\'DejaVu_Sans_Condensed\',\'DejaVu_Sans\']">' + group("pl-[8px]", "CH MATOSINHOS") + group("pl-[23px]", "FRUTAS E LEGUMES") + group("pl-[38px]", "REPOSIÇÃO") + "</div>";
EMP.forEach(([name, codes], r) => {
  const sel = r === 6;
  body += `<div class="h-[25px] flex border-b border-[#ccc] ${sel ? "bg-[#c8c8ff]" : ""}"><div class="w-[198px] shrink-0 flex pl-[25px] text-[11px] text-[#0a5fc0] font-['DejaVu_Sans_Condensed','DejaVu_Sans'] whitespace-nowrap"><span class="w-[13px] h-[13px] mt-[4px] border border-[#666] bg-white shrink-0"></span><span class="ml-[3px] leading-[27px] tracking-[-0.1px]">${name}</span></div>`;
  [...codes].forEach((c, i) => {
    const we = weekend(i) ? "bg-[#a8a8a8]" : "";
    const ring = sel && i === 13 ? "relative left-px outline-3 outline-[#800080] -outline-offset-1" : "";
    const pill = FIX[c]
      ? `<div class="w-[30px] h-[19px] rounded-[3px] text-[10px] leading-[19px] ${FIX[c][1]}">${FIX[c][0]}</div>`
      : `<div class="w-[30px] h-[19px] ${ring || "rounded-[3px]"} bg-[#14a098] text-[10px] leading-[8px] tracking-[-0.7px] pt-[1.5px]">${S[c].replace(" ", "<br>")}</div>`;
    body += `<div class="${width(i)} ${we} shrink-0 border-l border-[#ccc] pl-[1px] pt-[2px] text-white text-center font-['Liberation_Sans']">${pill}</div>`;
  });
  body += '<div class="w-px shrink-0 border-l border-[#ccc]"></div></div>';
});
document.getElementById("rows").innerHTML = body;
</script>
</body>
</html>
